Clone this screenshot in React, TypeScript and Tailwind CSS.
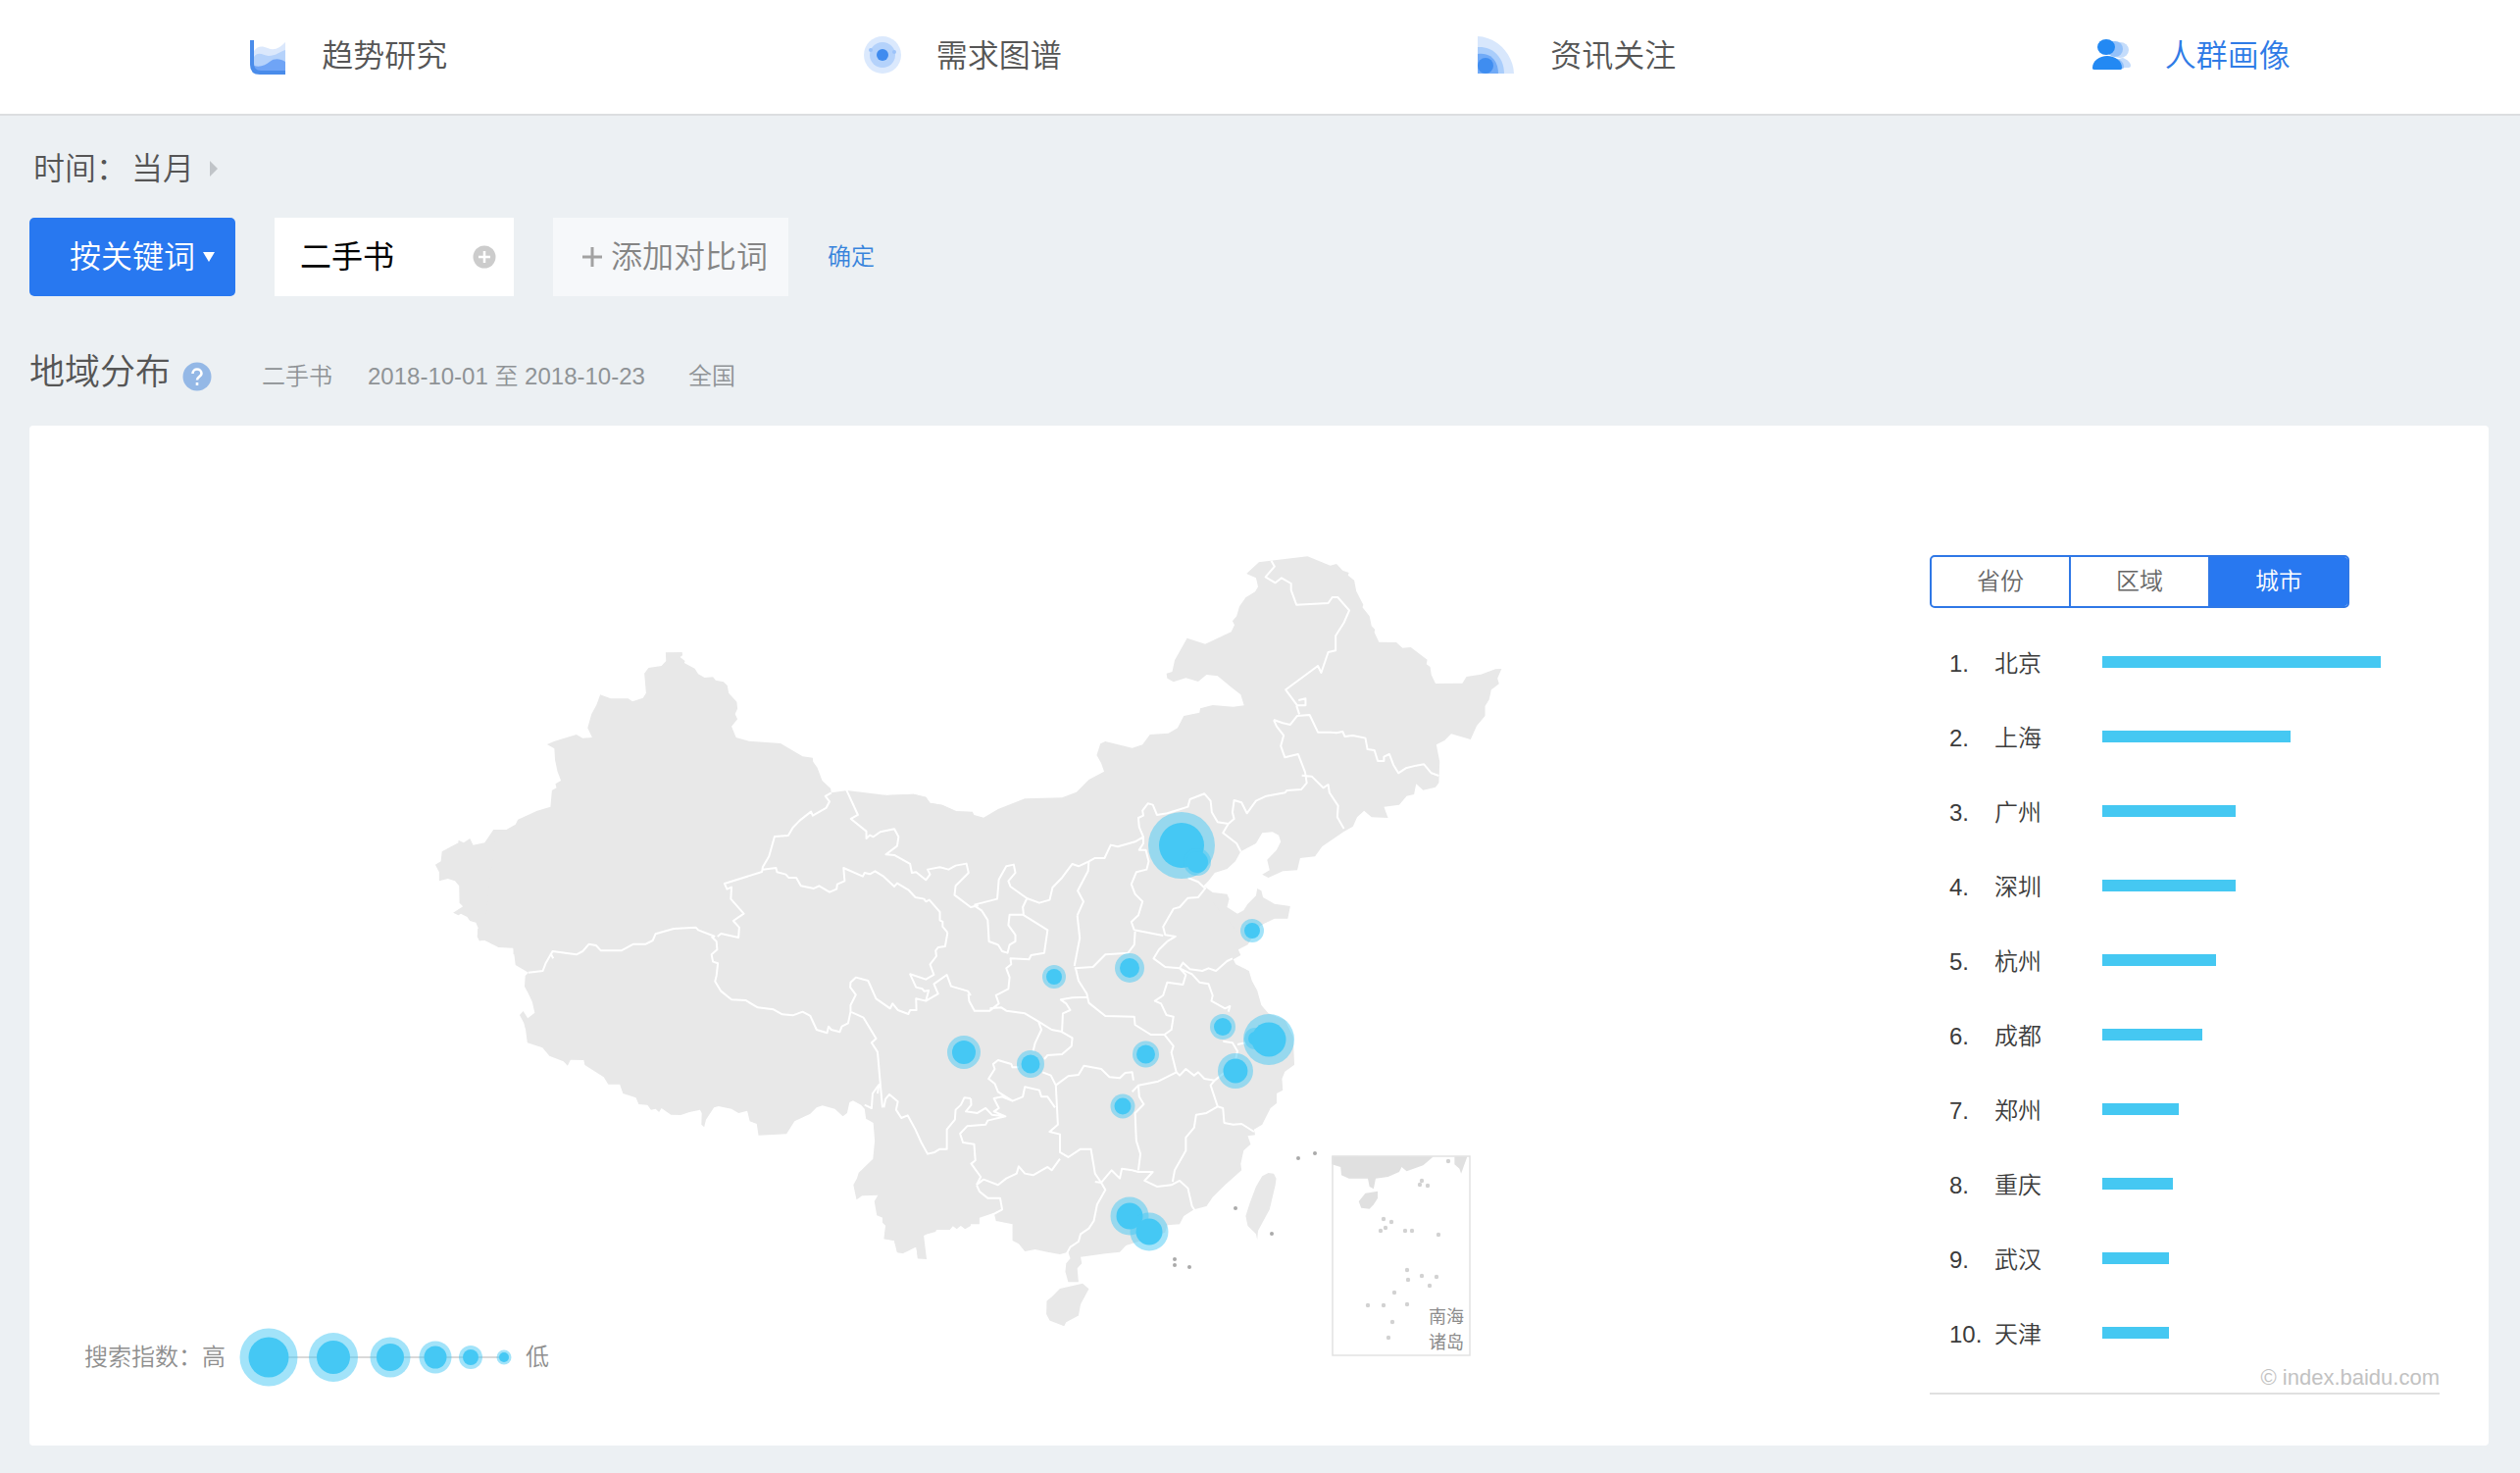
import { useState } from 'react';

interface City {
  name: string;
  value: number;
}

interface Bubble {
  x: number;
  y: number;
  r: number;
  core: number;
}

const cities: City[] = [
  { name: '北京', value: 284 },
  { name: '上海', value: 192 },
  { name: '广州', value: 136 },
  { name: '深圳', value: 136 },
  { name: '杭州', value: 116 },
  { name: '成都', value: 102 },
  { name: '郑州', value: 78 },
  { name: '重庆', value: 72 },
  { name: '武汉', value: 68 },
  { name: '天津', value: 68 },
];

const bubbles: Bubble[] = [
  { x: 775, y: 312, r: 34, core: 23 },
  { x: 791, y: 329, r: 14, core: 11 },
  { x: 847, y: 399, r: 12, core: 8 },
  { x: 722, y: 437, r: 15, core: 10 },
  { x: 645, y: 446, r: 12, core: 8 },
  { x: 553, y: 523, r: 17, core: 12 },
  { x: 621, y: 535, r: 14, core: 9.5 },
  { x: 738.5, y: 525, r: 13.5, core: 9.5 },
  { x: 715, y: 578, r: 12.5, core: 8.5 },
  { x: 817, y: 497, r: 13, core: 9 },
  { x: 850, y: 509, r: 11, core: 7 },
  { x: 864, y: 510, r: 26, core: 17.5 },
  { x: 830, y: 542, r: 18, core: 12.5 },
  { x: 722, y: 690, r: 19.5, core: 13.5 },
  { x: 742, y: 706, r: 19.5, core: 13.5 },
];

const legendBubbles: Bubble[] = [
  { x: 30, y: 30, r: 29.5, core: 20.5 },
  { x: 96, y: 30, r: 25, core: 17 },
  { x: 154, y: 30, r: 20.5, core: 14 },
  { x: 200, y: 30, r: 16.5, core: 11.5 },
  { x: 236, y: 30, r: 12, core: 8 },
  { x: 270, y: 30, r: 7.5, core: 5 },
];

// The country is drawn in four overlapping sheets, each with its own scale
const sheets = [
  {
    transform: 'scale(.3571 .3333)',
    land: 'M39,995 55,985 58,955 105,928 105,920 120,928 138,915 147,935 180,928 205,888 242,888 268,872 275,857 330,830 368,818 372,768 385,760 382,748 398,738 388,710 381,675 379,640 358,627 380,617 442,597 460,608 487,606 474,577 485,535 500,505 510,475 540,487 590,487 602,496 632,485 641,470 636,410 648,393 685,387 698,372 697,346 744,345 745,355 738,360 752,372 750,378 780,395 790,412 808,423 832,421 840,431 862,436 873,447 877,470 900,497 902,518 895,534 902,550 885,572 898,606 935,617 1025,624 1088,664 1117,668 1118,680 1130,698 1144,738 1168,762 1170,775 1215,768 1330,783 1405,779 1440,788 1452,806 1485,812 1525,832 1568,834 1568,1270 262,1270 262,1249 220,1247 180,1226 165,1228 159,1215 162,1190 155,1172 138,1167 130,1155 112,1145 105,1150 90,1142 118,1123 108,1112 107,1060 95,1045 75,1038 50,1045 50,1018z',
    borders:
      'M1170,775 1153,786 1165,802 1155,822 1117,845 1112,833 1080,860 1060,882 1047,906 1008,909 992,970 974,1003 972,1017 865,1053 872,1070 885,1064 883,1100 920,1145 890,1167 907,1187 905,1218 855,1206 845,1215M1213,766 1246,843 1226,855 1270,893 1270,915 1280,905 1290,910 1310,895 1350,886 1362,910 1358,938 1326,964 1350,966 1395,993 1400,1020 1412,1018 1440,1042 1452,1025 1445,1010 1480,1003 1505,1010 1525,998 1556,992 1562,1020 1525,1060 1522,1088 1568,1125 1590,1120M974,1010 1012,1005 1015,1018 1040,1025 1048,1035 1070,1035 1083,1060 1120,1068 1135,1060 1165,1079 1185,1070 1187,1055 1208,1045 1205,1005 1260,1031 1265,1020 1280,1024 1295,1015 1320,1032 1350,1062 1358,1052 1390,1072 1410,1095 1435,1100 1440,1108 1450,1103 1480,1140 1480,1165 1488,1170 1488,1185 1502,1203',
  },
  {
    transform: 'translate(0 300) scale(.3571 .3333)',
    land: 'M210,0 180,290 160,290 159,315 165,328 180,326 220,348 262,350 268,402 305,425 296,435 294,468 305,490 316,515 323,548 303,565 290,543 280,555 292,580 297,600 302,640 345,655 365,680 405,697 417,710 425,692 463,693 466,708 520,745 533,767 566,767 575,795 612,808 620,828 645,830 655,845 668,842 678,852 685,840 712,860 740,861 765,852 795,845 800,855 799,890 807,898 812,875 835,838 848,834 885,842 905,855 930,848 937,880 957,888 962,923 1042,919 1065,880 1110,857 1128,838 1145,832 1180,842 1203,865 1215,855 1222,822 1232,817 1255,830 1265,842 1269,872 1290,885 1294,940 1289,995 1265,1020 1248,1038 1243,1055 1233,1075 1242,1120 1258,1108 1303,1106 1293,1125 1300,1168 1327,1180 1320,1240 1350,1245 1360,1283 1380,1282 1412,1265 1418,1300 1440,1300 1430,1235 1438,1215 1445,1225 1468,1218 1476,1198 1508,1213 1520,1197 1528,1207 1540,1200 1552,1210 1568,1200 1568,0z',
    borders:
      'M305,425 346,420 355,395 374,360 442,370 460,360 478,338 498,342 512,358 570,358 605,338 640,338 660,327 668,307 720,291 783,287 790,295 838,315M368,366 376,382M828,315 842,330 844,355 828,370 832,392 846,397 842,435 838,452 855,482 885,508 925,510 960,532 1005,538 1030,553 1060,556 1088,545 1110,558 1128,600 1158,610 1162,590 1170,600 1194,607 1200,590 1218,580 1225,545 1225,525 1240,493 1224,470 1225,455 1240,440 1275,450 1298,505 1338,535 1345,520 1360,540 1390,552 1395,540 1413,540 1412,505 1440,512 1448,480 1435,482 1430,475 1412,470 1395,430 1440,446 1463,432 1452,400 1470,375 1468,358 1475,348 1495,345 1502,303M1225,545 1262,563 1298,627 1285,640 1302,668 1310,765 1316,838M1265,830 1285,840 1288,795 1306,768 1302,795M1320,838 1325,812 1336,798 1360,820 1355,845 1370,870 1388,862 1410,905 1427,945 1445,980 1465,975 1480,965 1500,965 1500,905 1523,875 1525,845 1540,830 1550,808 1568,810M1440,512 1475,490 1463,460 1500,432 1512,467 1560,482 1568,495',
  },
  {
    transform: 'translate(470 0) scale(.4209 .3333)',
    land: 'M0,783 75,779 105,788 115,806 145,812 180,832 218,833 222,843 245,851 280,825 345,793 435,790 470,773 500,735 537,710 530,685 519,660 528,625 540,618 605,638 630,628 648,597 693,593 715,577 730,540 768,530 770,517 800,507 850,512 876,508 868,475 845,452 812,418 785,414 765,435 735,424 705,436 690,425 688,410 702,405 708,370 738,302 782,320 845,283 853,262 848,250 858,235 865,205 880,178 903,160 910,145 905,118 882,105 912,70 940,65 1030,52 1085,80 1100,75 1115,95 1130,102 1128,110 1143,125 1148,158 1165,200 1163,208 1180,235 1185,265 1193,275 1192,285 1203,314 1245,315 1260,332 1280,330 1320,368 1318,382 1327,390 1330,415 1340,441 1405,440 1415,420 1450,413 1485,397 1500,396 1490,425 1494,442 1475,460 1470,490 1460,510 1460,540 1440,570 1425,612 1378,595 1362,615 1342,628 1350,680 1348,745 1340,758 1310,767 1293,748 1288,780 1270,785 1252,812 1215,818 1225,852 1185,850 1167,830 1150,850 1140,878 1117,895 1065,940 1048,970 1012,975 1005,1012 970,1015 935,1035 920,1025 938,1012 932,980 955,950 965,925 960,905 945,895 920,898 905,930 868,955 855,985 835,1008 805,1020 790,1045 778,1060 800,1080 835,1085 840,1100 835,1125 860,1145 875,1135 885,1115 905,1090 908,1068 918,1075 922,1095 950,1115 988,1122 982,1160 950,1160 925,1175 900,1195 890,1225 862,1250 850,1270 0,1270z',
    borders:
      'M942,65 950,83 928,115 952,133 967,118 990,135 990,155 1003,200 1080,195 1090,177 1103,177 1131,217 1118,255 1098,295 1098,340 1080,345 1063,408 1055,387 977,460 1005,508 1025,508 1025,487 1008,492M1003,508 1010,535M948,552 955,572 972,600 965,632 975,667 1007,657 1024,712 1028,745 1015,765 980,768 975,775 930,785 905,800 883,838 870,805 852,798 848,835 852,855 838,870 812,865 798,835 795,800 780,778 745,795 740,818 715,828 690,838M948,552 970,562 988,567 1005,540 1035,537 1055,590 1085,590 1100,592 1115,588 1120,603 1140,600 1170,608 1175,642 1192,645 1200,678 1215,678 1215,665 1228,657 1238,690 1250,715 1268,700 1293,692 1312,688 1330,715 1348,723M1016,722 1040,725 1068,760 1080,750 1083,775 1104,815 1102,850 1118,885M838,870 825,898 858,930 868,955M690,838 665,843 655,812 643,808 630,830 632,845 620,852 622,880 632,910 632,930 622,950 638,950 645,985 640,1010 615,1018 603,1055 612,1085 630,1108 620,1150 603,1170 610,1195M632,910 612,925 570,940 553,935 538,975 515,975 500,985 475,1000 460,993 435,1035 412,1065 405,1103 380,1112 350,1098 310,1062 305,1045 322,1020 318,995 300,1000 282,1040 278,1100 222,1118M500,985 498,1015 473,1075 487,1108 472,1150M350,1098 340,1125 342,1150M740,1035 765,1048 782,1068 765,1095 740,1097 720,1125 705,1130 680,1185 685,1210 710,1215 690,1230M610,1195 680,1212',
  },
  {
    transform: 'translate(470 350) scale(.4209 .3333)',
    land: 'M0,0 760,0 860,150 895,170 885,190 862,205 868,222 850,235 856,250 888,270 895,300 908,330 918,375 935,400 975,420 995,470 998,557 975,578 968,600 970,635 955,645 955,675 940,690 920,740 900,755 903,772 885,775 892,800 875,820 868,860 870,880 830,925 800,962 785,990 755,1000 730,1020 720,1045 690,1048 685,1070 640,1090 590,1110 575,1130 540,1135 480,1145 483,1165 472,1180 475,1222 450,1222 443,1190 445,1165 455,1150 450,1130 430,1137 400,1130 370,1122 345,1128 330,1105 315,1095 315,1045 275,1035 270,1010 235,1025 235,1045 205,1045 200,1058 190,1048 180,1060 170,1050 160,1062 130,1062 100,1080 107,1152 85,1150 82,1115 65,1115 50,1135 35,1130 28,1095 5,1090 8,1050 0,1040zM430,1242 485,1226 500,1243 480,1290 475,1325 445,1345 440,1357 405,1340 397,1320 398,1280 410,1268zM935,888 948,890 954,905 952,925 938,1000 910,1065 908,1092 905,1075 885,1050 880,1020 890,980 905,930 920,898z',
    borders:
      'M222,70 240,85 255,115 258,180 280,190 290,210 303,215 308,190 322,180 322,160 305,130 308,98 340,98 400,145 392,215 360,222 355,235 310,232 312,250 300,262 308,290 305,325 275,345 282,370 260,392 223,392 210,362 208,340M260,385 288,382 300,392 345,400 378,425 410,450 432,455 460,475 458,500 435,525 400,528 392,540M378,425 385,450 370,490 365,515M435,455 437,400 455,390 445,370 432,358 460,352 495,350M472,100 478,170 465,255M465,262 510,258 540,220 560,218 595,215 610,190 612,150M468,262 475,300 495,340 500,368 540,408 610,410 612,435 650,465 683,465M690,180 670,205 657,232 685,258 720,262 735,282 728,312 690,305 680,345 660,362 675,370 688,405 705,410 700,450 683,465 705,500 700,520 712,580M720,262 728,245 745,265 775,270 790,262 808,270 835,240 848,232M720,262 750,280 768,305 790,310 800,345 797,362 830,385 842,378 838,395M825,485 848,490 860,515 855,545M860,495 880,490M330,565 315,565 312,555 280,543 268,555 272,570 257,600 272,615 280,640 315,668 340,655 345,625 380,635 385,655 400,655 418,688M388,580 408,590 420,620 450,592 475,588 488,560 530,570 550,595 575,598 588,582 605,580 608,605M605,640 620,620 668,608 712,580 720,590 735,570 755,590 765,580 780,600 805,605M420,620 425,740 405,762 430,770 430,825 450,840 480,815 505,815 515,890 530,918M315,668 290,655 270,660 282,690 270,700 298,715 255,728 250,740 205,745 188,768 195,795 222,800 225,850 215,860 238,900 228,925M214,660 215,680 202,700 230,705 250,690 265,710 298,715M228,925 245,908 280,925 300,905 325,890 330,868 345,890 365,895 400,870 410,880 430,845M228,925 235,945 255,965 285,965 290,1000 268,1015M620,620 622,655 633,678 612,705 615,790 625,830 620,880M530,918 555,880 575,905 580,875 605,880 620,885 655,885 635,912 665,930 700,925 720,912 740,935 750,990 758,1005M515,915 530,918 540,940 520,985 512,1035 500,1058 480,1075 475,1098 455,1115 445,1138M703,915 708,880 735,820 735,780 755,750 760,710 785,705 812,685M805,605 795,620 812,685 825,690 828,735 850,740 870,738 900,762M805,605 830,580',
  },
];

const islets = [
  [894, 631], [911, 626], [830, 682], [867, 708], [768, 734], [768, 740], [783, 742],
];

const southSeaIslets = [
  [1020, 654], [1018, 658], [1026, 659], [1047, 634], [981, 693], [989, 696], [983, 702], [978, 705],
  [1003, 705], [1010, 705], [1037, 709], [1005, 745], [1006, 755], [1020, 751], [1035, 752], [1028, 761],
  [992, 768], [965, 781], [981, 781], [1005, 780], [990, 798], [986, 814],
];

function TrendIcon() {
  return (
    <svg viewBox="0 0 40 40" className="size-10" aria-hidden="true">
      <path d="M5 15C9 9 14 10 19 12 26 15 31 12 37 6V34H5z" fill="#dbe8fc" />
      <path d="M5 21C9 15 14 19 20 20 27 20 31 16 37 14V34H5z" fill="#b5d2fb" />
      <path d="M5 30C12 32 17 29 21 26 26 22 32 23 37 26V36H5z" fill="#6fa4f6" />
      <path d="M1 4H5V28Q5 35 12 35H37V39H11Q1 39 1 29z" fill="#4a8cea" />
    </svg>
  );
}

function DemandIcon() {
  return (
    <svg viewBox="0 0 40 40" className="size-10" aria-hidden="true">
      <circle cx="19" cy="19" r="19" fill="#dbe9fd" />
      <circle cx="19" cy="19" r="13" fill="#b4d2fb" />
      <circle cx="7" cy="14" r="2" fill="#9cc3fa" />
      <circle cx="31" cy="16" r="2" fill="#9cc3fa" />
      <circle cx="19" cy="19" r="6" fill="#3f8bef" />
    </svg>
  );
}

function NewsIcon() {
  return (
    <svg viewBox="0 0 40 40" className="size-10" aria-hidden="true">
      <path d="M0 0C20 1 36 18 37 38H0z" fill="#d8e7fc" />
      <path d="M0 11C16 10 27 22 27 38H0z" fill="#a9cdfb" />
      <path d="M0 18C12 16 21 24 21 38H0z" fill="#70aaf7" />
      <ellipse cx="8" cy="30" rx="8" ry="8" fill="#3f8df0" />
    </svg>
  );
}

function CrowdIcon() {
  return (
    <svg viewBox="0 0 40 40" className="size-10" aria-hidden="true">
      <ellipse cx="28" cy="14" rx="9" ry="8" fill="#c4dcfb" />
      <path d="M22 32C22 26 27 22 31 22 36 24 39 27 39 30 39 32 37 32 35 32z" fill="#c4dcfb" />
      <ellipse cx="23" cy="13" rx="8" ry="8" fill="#93c1fa" />
      <path d="M17 33V23C27 21 32 26 32 31 32 33 31 33 30 33z" fill="#93c1fa" />
      <ellipse cx="14" cy="11" rx="9" ry="8" fill="#2389f3" />
      <path d="M0 32C0 25 7 20 15 20 23 20 30 25 30 32 30 34 29 34 28 34H2C0 34 0 33 0 32z" fill="#2389f3" />
    </svg>
  );
}

function BubbleDot({ x, y, r, core }: Bubble) {
  return (
    <>
      <circle cx={x} cy={y} r={r} fill="#45c8f4" fillOpacity="0.5" />
      <circle cx={x} cy={y} r={core} fill="#45c8f4" />
    </>
  );
}

function ChinaMap() {
  return (
    <svg viewBox="0 0 1130 850" className="w-full max-w-[1130px]" role="img" aria-label="地域分布">
      {sheets.map((s) => (
        <path key={s.transform} transform={s.transform} d={s.land} fill="#e8e8e8" />
      ))}
      {sheets.map((s) => (
        <path
          key={s.transform}
          transform={s.transform}
          d={s.borders}
          fill="none"
          stroke="#fff"
          strokeWidth="2"
          strokeLinejoin="round"
          vectorEffect="non-scaling-stroke"
        />
      ))}
      {islets.map(([x, y]) => (
        <circle key={`${x}-${y}`} cx={x} cy={y} r="2" fill="#aaa" />
      ))}

      {/* South China Sea inset */}
      <g transform="translate(470 350) scale(.4209 .3333)" fill="#e0e0e0">
        <path d="M1089,836 1335,838 1310,865 1270,883 1258,870 1252,885 1225,900 1195,905 1190,937 1180,930 1176,905 1130,905 1112,895 1110,870 1089,862z" />
        <path d="M1170,950 1200,944 1200,965 1190,985 1180,998 1160,995 1154,975z" />
        <path d="M1386,838 1417,838 1402,890 1398,875 1386,862z" />
      </g>
      <rect x="929" y="629" width="140" height="203" fill="none" stroke="#e2e2e2" strokeWidth="1.5" />
      {southSeaIslets.map(([x, y]) => (
        <circle key={`${x}-${y}`} cx={x} cy={y} r="2.2" fill="#d2d2d2" />
      ))}
      <text x="1027" y="799" fontSize="18" fontWeight="400" fill="#8c8c8c">南海</text>
      <text x="1027" y="825" fontSize="18" fontWeight="400" fill="#8c8c8c">诸岛</text>

      {bubbles.map((b) => (
        <BubbleDot key={`${b.x}-${b.y}`} {...b} />
      ))}
    </svg>
  );
}

const navItems = [
  { label: '趋势研究', Icon: TrendIcon },
  { label: '需求图谱', Icon: DemandIcon },
  { label: '资讯关注', Icon: NewsIcon },
  { label: '人群画像', Icon: CrowdIcon },
];

const scopes = ['省份', '区域', '城市'];

export default function App() {
  const [scope, setScope] = useState('城市');
  const [keyword, setKeyword] = useState('二手书');

  const max = Math.max(...cities.map((c) => c.value));

  return (
    <div className="min-h-screen bg-[#ecf0f3] font-['Liberation_Sans','Noto_Sans_CJK_SC',sans-serif] font-[350] text-[#555]">
      <header className="border-b-2 border-[#dcdee0] bg-white">
        <nav className="grid grid-cols-4 pt-[33px] pr-[34px] pb-[35px] pl-[30px]">
          {navItems.map(({ label, Icon }) => (
            <a
              key={label}
              href="#"
              className={`flex items-center justify-center gap-[34px] pl-6 text-[32px] leading-[48px] ${
                label === '人群画像' ? 'text-[#2f7be6]' : ''
              }`}
            >
              <Icon />
              {label}
            </a>
          ))}
        </nav>
      </header>

      <main className="pr-8 pb-7 pl-[30px]">
        <div className="flex items-center pt-[30px] text-[32px] leading-[48px]">
          <span className="pl-1">时间：</span>
          <button type="button" className="flex items-center gap-4 pl-1">
            当月
            <svg viewBox="0 0 8 16" className="h-4 w-2" aria-hidden="true">
              <path d="M0 0 8 8 0 16z" fill="#c0c4c8" />
            </svg>
          </button>
        </div>

        <div className="mt-[26px] flex items-center gap-10">
          <button
            type="button"
            className="flex h-20 w-[210px] items-center justify-center gap-2 rounded-[5px] bg-[#2878f0] pl-5 text-[32px] text-white"
          >
            按关键词
            <svg viewBox="0 0 12 10" className="h-[10px] w-3" aria-hidden="true">
              <path d="M0 0H12L6 10z" fill="#fff" />
            </svg>
          </button>
          <div className="flex h-20 w-[244px] items-center bg-white pr-[18px] pl-[26px]">
            <input
              aria-label="关键词"
              value={keyword}
              onChange={(e) => setKeyword(e.target.value)}
              className="w-full min-w-0 flex-1 text-[32px] font-normal text-black outline-none"
            />
            <button type="button" aria-label="添加" className="shrink-0">
              <svg viewBox="0 0 24 24" className="size-6" aria-hidden="true">
                <circle cx="12" cy="12" r="11.5" fill="#ccc" />
                <path d="M12 6V18M6 12H18" stroke="#fff" strokeWidth="2.5" />
              </svg>
            </button>
          </div>
          <button
            type="button"
            className="flex h-20 w-60 items-center justify-center gap-2 bg-[#f6f8fa] pl-2 text-[32px] text-[#858585]"
          >
            <svg viewBox="0 0 22 22" className="size-[22px]" aria-hidden="true">
              <path d="M11 1V21M1 11H21" stroke="#a2a2a2" strokeWidth="3" />
            </svg>
            添加对比词
          </button>
          <button type="button" className="text-2xl text-[#3884dc]">确定</button>
        </div>

        <div className="mt-[52px] flex items-center text-2xl text-[#8f9396]">
          <h2 className="text-[36px] leading-[52px] font-[350] text-[#555]">地域分布</h2>
          <div className="flex items-center pt-2">
            <svg viewBox="0 0 30 30" className="ml-3 size-[30px]" aria-hidden="true">
              <circle cx="15" cy="15" r="14.5" fill="#94b8e6" />
              <path
                d="M10.5 12C10.5 6 19.5 6 19.5 12 19.5 15 15 15 15 18.5M15 21V24"
                fill="none"
                stroke="#fff"
                strokeWidth="2.6"
              />
            </svg>
            <span className="ml-[51px]">二手书</span>
            <span className="ml-9">2018-10-01 至 2018-10-23</span>
            <span className="ml-11">全国</span>
          </div>
        </div>

        <section className="mt-7 flex rounded-[4px] bg-white pt-[116px] pr-[50px] pb-[52px] pl-14">
          <div className="grid flex-1">
            <div className="col-start-1 row-start-1 flex items-start justify-center pr-16">
              <ChinaMap />
            </div>
            <div className="col-start-1 row-start-1 mb-2 flex items-center self-end text-2xl text-[#8f8f8f]">
              <span>搜索指数：高</span>
              <svg viewBox="0 0 278 60" className="mx-[14px] h-[60px] w-[278px]" aria-hidden="true">
                <path d="M30 30H270" stroke="#ccc" strokeWidth="1.5" />
                {legendBubbles.map((b) => (
                  <BubbleDot key={b.x} {...b} />
                ))}
              </svg>
              <span>低</span>
            </div>
          </div>

          <aside className="w-[520px] shrink-0 pt-4">
            <div className="flex h-[54px] w-[428px] overflow-hidden rounded-[5px] border-2 border-[#2f78e6] text-2xl">
              {scopes.map((s) => (
                <button
                  key={s}
                  type="button"
                  onClick={() => setScope(s)}
                  className={`flex-1 border-l-2 border-[#2f78e6] first:border-l-0 ${
                    s === scope ? 'bg-[#2878f0] text-white' : 'text-[#666]'
                  }`}
                >
                  {s}
                </button>
              ))}
            </div>

            <ol className="mt-[19px] text-2xl text-[#3c3c3c]">
              {cities.map((city, i) => (
                <li key={city.name} className="flex h-[76px] items-center pl-5">
                  <span className="w-[46px]">{i + 1}.</span>
                  <span className="w-[110px]">{city.name}</span>
                  <div className="mb-1 w-[284px]">
                    <div className="h-3 bg-[#45c8f2]" style={{ width: `${(city.value / max) * 100}%` }} />
                  </div>
                </li>
              ))}
            </ol>
            <p className="h-[23px] border-b-2 border-[#e0e0e0] text-right text-[22px] leading-3 text-[#c2c2c2]">
              © index.baidu.com
            </p>
          </aside>
        </section>
      </main>
    </div>
  );
}
